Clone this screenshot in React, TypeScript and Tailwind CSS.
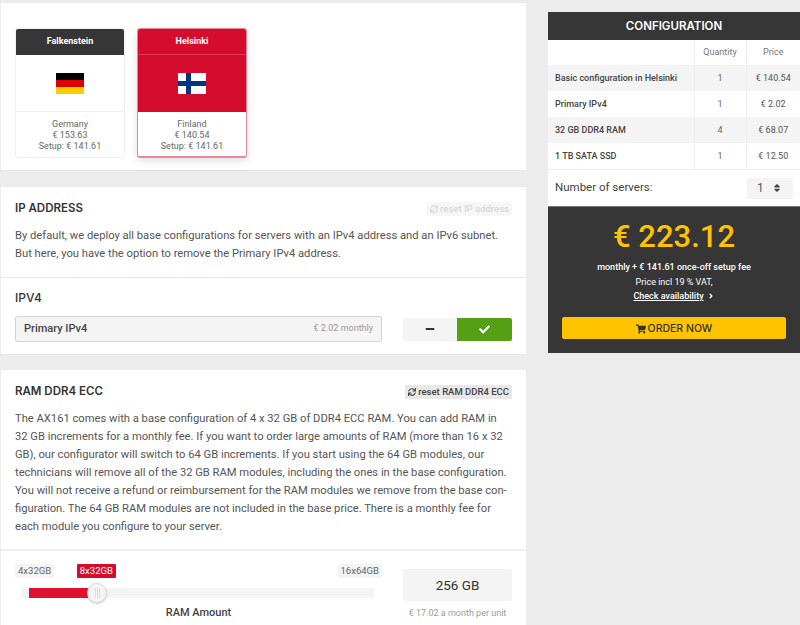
import { FaCheck, FaMinus, FaShoppingCart, FaSort, FaSync, FaAngleRight } from "react-icons/fa";

const rows = [
  ["Basic configuration in Helsinki", "1", "€ 140.54"],
  ["Primary IPv4", "1", "€ 2.02"],
  ["32 GB DDR4 RAM", "4", "€ 68.07"],
  ["1 TB SATA SSD", "1", "€ 12.50"],
];

function Germany() {
  return (
    <svg width="28" height="21" viewBox="0 0 28 21" className="block">
      <rect width="28" height="7" fill="#000" />
      <rect y="7" width="28" height="7" fill="#dd0000" />
      <rect y="14" width="28" height="7" fill="#ffce00" />
    </svg>
  );
}

function Finland() {
  return (
    <svg width="28" height="21" viewBox="0 0 28 21" className="block">
      <rect width="28" height="21" fill="#fff" />
      <rect x="8" width="5" height="21" fill="#003580" />
      <rect y="8" width="28" height="5" fill="#003580" />
    </svg>
  );
}

function Location({ name, country, price, flag, active }: { name: string; country: string; price: string; flag: React.ReactNode; active?: boolean }) {
  return (
    <div className={`w-[110px] h-[130px] rounded-[3px] overflow-hidden flex flex-col border ${active ? "border-[#e8899b] border-b-2 shadow-[0_3px_8px_rgba(0,0,0,0.12)]" : "border-[#f0f0f0]"}`}>
      <div className={`h-[26px] shrink-0 flex items-center justify-center text-[9px] font-bold text-white ${active ? "bg-[#d50c2d] border-b border-[#dd3a55]" : "bg-[#363636]"}`}>{name}</div>
      <div className={`h-[57px] shrink-0 flex items-center justify-center ${active ? "bg-[#d50c2d]" : "bg-white border-b border-[#f0f0f0]"}`}>{flag}</div>
      <div className="flex-1 pt-[7px] text-center text-[9px] leading-[11px] text-[#666] bg-white">
        <div>{country}</div>
        <div>{price}</div>
        <div>Setup: € 141.61</div>
      </div>
    </div>
  );
}

export default function App() {
  return (
    <div className="w-[800px] h-[625px] overflow-hidden bg-[#ececec] flex font-['Roboto',sans-serif] text-[#444]">
      <div className="w-[525px] ml-px mt-[3px] shrink-0 flex flex-col">
        <section className="h-[168px] shrink-0 bg-white border-b border-[#e4e4e4] pt-[25px] pl-[14px] flex gap-[12px] items-start">
          <Location name="Falkenstein" country="Germany" price="€ 153.63" flag={<Germany />} />
          <Location active name="Helsinki" country="Finland" price="€ 140.54" flag={<Finland />} />
        </section>

        <section className="mt-[16px] h-[168px] shrink-0 bg-white border-b border-[#e4e4e4]">
          <div className="h-[91px] px-[14px] pt-[15px] border-b border-[#e8e8e8]">
            <div className="flex items-center justify-between h-[14px]">
              <h2 className="font-['Inter',sans-serif] font-semibold text-[11.5px] text-[#333]">IP ADDRESS</h2>
              <div className="h-[14px] px-[3px] bg-[#f6f6f6] rounded-[2px] flex items-center gap-[2px] text-[9.5px] font-medium text-[#d8d8d8]"><FaSync className="w-[8px] h-[8px]" />reset IP address</div>
            </div>
            <p className="mt-[11px] text-[11.2px] leading-[18px] text-[#555] whitespace-nowrap">By default, we deploy all base configurations for servers with an IPv4 address and an IPv6 subnet.<br />But here, you have the option to remove the Primary IPv4 address.</p>
          </div>
          <div className="px-[14px] pt-[13px]">
            <h3 className="font-['Inter',sans-serif] font-medium text-[12px] leading-[14px] text-[#333]">IPV4</h3>
            <div className="mt-[11px] flex items-center justify-between">
              <div className="w-[367px] h-[26px] bg-[#f4f4f4] border border-[#d4d4d4] rounded-[2px] flex items-center justify-between pl-[8px] pr-[8px]">
                <span className="text-[11px] font-medium text-[#444]">Primary IPv4</span>
                <span className="text-[9px] text-[#999]">€ 2.02 monthly</span>
              </div>
              <div className="flex h-[23px] rounded-[2px] overflow-hidden">
                <div className="w-[54px] bg-[#f4f4f4] flex items-center justify-center text-[#333]"><FaMinus className="w-[10px] h-[10px]" /></div>
                <div className="w-[55px] bg-[#559f14] flex items-center justify-center text-white"><FaCheck className="w-[11px] h-[11px]" /></div>
              </div>
            </div>
          </div>
        </section>

        <section className="mt-[15px] flex-1 bg-white">
          <div className="h-[181px] px-[14px] pt-[15px] border-b-2 border-[#eeeeee]">
            <div className="flex items-center justify-between h-[14px]">
              <h2 className="font-['Inter',sans-serif] font-semibold text-[11.5px] text-[#333]">RAM DDR4 ECC</h2>
              <div className="h-[14px] px-[3px] bg-[#e8e8e8] rounded-[2px] flex items-center gap-[2px] text-[9.5px] font-medium text-[#444]"><FaSync className="w-[8px] h-[8px]" />reset RAM DDR4 ECC</div>
            </div>
            <p className="mt-[11px] text-[11.2px] leading-[18px] text-[#555] whitespace-nowrap">
              The AX161 comes with a base configuration of 4 x 32 GB of DDR4 ECC RAM. You can add RAM in<br />
              32 GB increments for a monthly fee. If you want to order large amounts of RAM (more than 16 x 32<br />
              GB), our configurator will switch to 64 GB increments. If you start using the 64 GB modules, our<br />
              technicians will remove all of the 32 GB RAM modules, including the ones in the base configuration.<br />
              You will not receive a refund or reimbursement for the RAM modules we remove from the base con-<br />
              figuration. The 64 GB RAM modules are not included in the base price. There is a monthly fee for<br />
              each module you configure to your server.
            </p>
          </div>
          <div className="px-[14px] pt-[13px] flex justify-between">
            <div className="w-[367px]">
              <div className="flex justify-between items-center h-[14px] text-[9.5px] text-[#666]">
                <span className="px-[3px] bg-[#f4f4f4] rounded-[2px]">4x32GB</span>
                <span className="px-[3px] bg-[#d50c2d] text-white rounded-[1px] -ml-[199px]">8x32GB</span>
                <span className="px-[3px] bg-[#f4f4f4] rounded-[2px]">16x64GB</span>
              </div>
              <div className="relative mt-[10px] ml-[7px] w-[352px] h-[10px] bg-[#f4f4f4]">
                <div className="ml-[7px] w-[60px] h-[10px] bg-[#e0102f]" />
                <div className="absolute left-[65px] -top-[5px] w-[20px] h-[20px] rounded-full bg-[#f4f4f4] border border-[#dcdcdc] shadow-[0_1px_2px_rgba(0,0,0,0.2)] flex items-center justify-center gap-[1px]">
                  <span className="w-px h-[10px] bg-[#ddd]" /><span className="w-px h-[10px] bg-[#ddd]" /><span className="w-px h-[10px] bg-[#ddd]" />
                </div>
              </div>
              <div className="mt-[7px] text-center text-[11px] font-medium text-[#444]">RAM Amount</div>
            </div>
            <div className="w-[109px] mt-[5px] text-center">
              <div className="h-[32px] bg-[#f4f4f4] rounded-[2px] flex items-center justify-center text-[13.5px] font-normal text-[#333]">256 GB</div>
              <div className="mt-[6px] text-[9px] text-[#999]">€ 17.02 a month per unit</div>
            </div>
          </div>
        </section>
      </div>

      <aside className="ml-[22px] mt-[12px] w-[252px] shrink-0 self-start">
        <div className="h-[28px] bg-[#363636] text-white flex items-center justify-center font-['Inter',sans-serif] font-semibold text-[11.5px] pt-px">CONFIGURATION</div>
        <table className="w-full bg-white border-collapse table-fixed text-[9px]">
          <thead>
            <tr className="h-[25px] text-[#777] font-normal">
              <th className="w-[146px] font-normal"></th>
              <th className="w-[52px] font-normal border-l border-[#eeeeee] pt-px">Quantity</th>
              <th className="font-normal border-l border-[#eeeeee] pt-px">Price</th>
            </tr>
          </thead>
          <tbody>
            {rows.map((r, i) => (
              <tr key={r[0]} className={`h-[26px] ${i % 2 === 0 ? "bg-[#f4f4f4]" : "bg-white"}`}>
                <td className="pl-[7px] pt-[2px] font-medium text-[#444] whitespace-nowrap">{r[0]}</td>
                <td className="pt-[2px] text-center text-[#666] border-l border-[#eeeeee]">{r[1]}</td>
                <td className="pt-[2px] text-center text-[#555] border-l border-[#eeeeee]">{r[2]}</td>
              </tr>
            ))}
          </tbody>
        </table>
        <div className="h-[37px] bg-white border-t border-[#eeeeee] flex items-center justify-between pl-[7px] pr-[7px]">
          <span className="text-[11.5px] text-[#444]">Number of servers:</span>
          <div className="w-[46px] h-[21px] bg-[#f4f4f4] rounded-[2px] flex items-center pl-[10px] gap-[9px] text-[12px] text-[#555]">1<FaSort className="w-[8px] h-[10px] text-[#444]" /></div>
        </div>
        <div className="h-[147px] bg-[#363636] border-t border-[#777] pt-[10px] text-center text-white">
          <div className="text-[#ffc300] text-[31px] leading-[40px] font-medium">€ 223.12</div>
          <div className="mt-[3px] text-[9px] leading-[14px] font-medium">monthly + € 141.61 once-off setup fee</div>
          <div className="mt-[1px] text-[9px] leading-[14px]">Price incl 19 % VAT,</div>
          <div className="text-[9px] leading-[14px] font-medium flex items-center justify-center gap-[3px]"><span className="underline">Check availability</span><FaAngleRight className="w-[8px] h-[8px]" /></div>
          <div className="mx-[14px] mt-[14px] h-[22px] pt-px bg-[#ffc300] rounded-[2px] flex items-center justify-center gap-[2px] text-[#333] font-['Inter',sans-serif] font-medium text-[10.5px]"><FaShoppingCart className="w-[10px] h-[10px]" />ORDER NOW</div>
        </div>
      </aside>
    </div>
  );
}
